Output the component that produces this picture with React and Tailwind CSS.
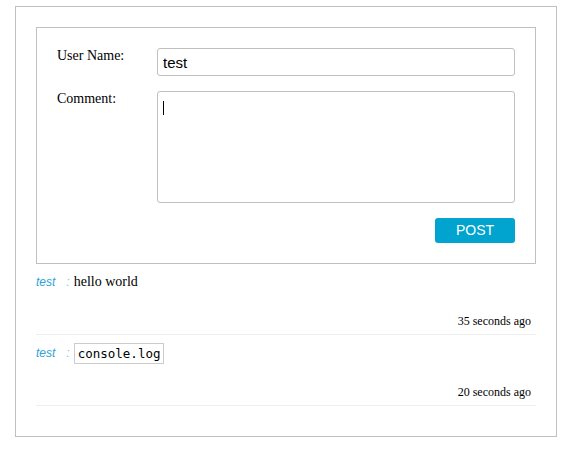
import { useState } from 'react';

const comments = [
  { id: 1, author: 'test', text: 'hello world', code: false, time: '35 seconds ago' },
  { id: 2, author: 'test', text: 'console.log', code: true, time: '20 seconds ago' },
];

function CommentItem({ comment }) {
  return (
    <div className="mt-[10px] border-b border-[#eeeeee] pb-[6px] pr-[5px]">
      <div className="leading-[16px] text-[14px] text-black [font-family:'Liberation_Serif',serif]">
        <span className="italic text-[12px] text-[#2fa2d6] [font-family:'Liberation_Sans',Arial,sans-serif]">
          {comment.author}
        </span>
        <span className="ml-[11px] mr-[4px] italic text-[12px] text-[#7fc4e6] [font-family:'Liberation_Sans',Arial,sans-serif]">
          :
        </span>
        {comment.code ? (
          <code className="relative top-[1px] border border-[#cccccc] px-[3px] py-[2px] text-[12.5px] leading-[15px] [font-family:'DejaVu_Sans_Mono',monospace]">
            {comment.text}
          </code>
        ) : (
          <span>{comment.text}</span>
        )}
      </div>
      <div className="mt-[24px] text-right text-[12px] leading-[14px] text-black [font-family:'Liberation_Serif',serif]">
        {comment.time}
      </div>
    </div>
  );
}

export default function App() {
  const [userName, setUserName] = useState('test');
  const [text, setText] = useState('');

  return (
    <div className="bg-white w-[575px] h-[460px] pt-[6px] pl-[15px]">
      <div className="w-[542px] border border-[#c0c0c0] px-[20px] pt-[20px] pb-[30px]">
        {/* post form */}
        <div className="border border-[#c0c0c0] p-[20px]">
          <div className="flex">
            <label className="w-[100px] text-[14px] leading-[16px] text-black [font-family:'Liberation_Serif',serif]">
              User Name:
            </label>
            <input
              className="w-[358px] h-[28px] rounded-[3px] border border-[#c0c0c0] px-[5px] text-[15px] text-black outline-none [font-family:'Liberation_Sans',Arial,sans-serif]"
              value={userName}
              onChange={(e) => setUserName(e.target.value)}
            />
          </div>
          <div className="flex mt-[15px]">
            <label className="w-[100px] text-[14px] leading-[16px] text-black [font-family:'Liberation_Serif',serif]">
              Comment:
            </label>
            <div className="relative">
              <textarea
                className="block w-[358px] h-[112px] resize-none rounded-[3px] border border-[#c0c0c0] px-[5px] pt-[8px] text-[15px] leading-[17px] text-black caret-black outline-none [font-family:'Liberation_Sans',Arial,sans-serif]"
                value={text}
                onChange={(e) => setText(e.target.value)}
              />
              {text === '' && (
                <span className="pointer-events-none absolute left-[6px] top-[10px] h-[14px] w-[1px] bg-black" />
              )}
            </div>
          </div>
          <div className="flex justify-end mt-[15px]">
            <button className="w-[80px] h-[25px] rounded-[3px] bg-[#00a4cf] text-white text-[14px] [font-family:'Liberation_Sans',Arial,sans-serif]">
              POST
            </button>
          </div>
        </div>

        {/* comment list */}
        {comments.map((comment) => (
          <CommentItem key={comment.id} comment={comment} />
        ))}
      </div>
    </div>
  );
}
